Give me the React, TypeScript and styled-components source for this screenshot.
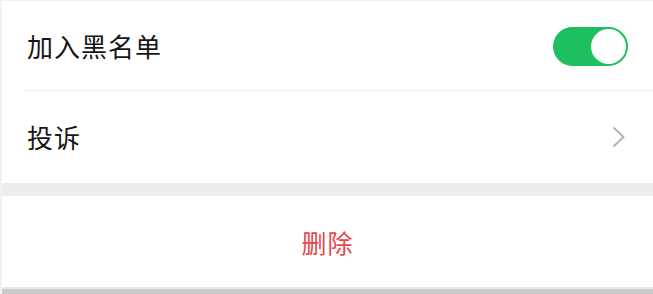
import styled, { createGlobalStyle } from "styled-components";

const GlobalStyle = createGlobalStyle`
  html, body {
    margin: 0;
    padding: 0;
    background: #ffffff;
  }
  body {
    font-family: "Noto Sans CJK SC", "Noto Sans", sans-serif;
    -webkit-font-smoothing: antialiased;
  }
`;

const Page = styled.div`
  width: 653px;
  height: 294px;
  display: flex;
  flex-direction: column;
  background: #ffffff;
  border-top: 1px solid #f0f0f0;
  border-left: 2px solid #f2f2f2;
  box-sizing: border-box;
  overflow: hidden;
`;

const Group = styled.div`
  display: flex;
  flex-direction: column;
  background: #ffffff;
`;

const Cell = styled.div<{ $divider?: boolean }>`
  position: relative;
  height: ${(p) => (p.$divider ? 90 : 92)}px;
  display: flex;
  align-items: center;
  justify-content: space-between;
  padding: 0 25px 0 25px;
  box-sizing: border-box;

  &::after {
    content: "";
    display: ${(p) => (p.$divider ? "block" : "none")};
    position: absolute;
    left: 23px;
    right: 0;
    bottom: 0;
    height: 1px;
    background: #ececec;
  }
`;

const Label = styled.span`
  font-size: 26px;
  line-height: 1;
  color: #161616;
  letter-spacing: 1px;
`;

const Switch = styled.div<{ $on: boolean }>`
  width: 75px;
  height: 39px;
  border-radius: 20px;
  background: ${(p) => (p.$on ? "#1dbf5f" : "#e5e5e5")};
  display: flex;
  align-items: center;
  justify-content: ${(p) => (p.$on ? "flex-end" : "flex-start")};
  padding: 2px;
  box-sizing: border-box;
`;

const Knob = styled.div`
  width: 35px;
  height: 35px;
  border-radius: 50%;
  background: #ffffff;
`;

const Chevron = styled.svg`
  width: 14px;
  height: 22px;
  margin-right: 2px;
`;

const Gap = styled.div`
  height: 13px;
  background: #ededed;
`;

const DangerCell = styled.button`
  height: 91px;
  border: none;
  background: #ffffff;
  display: flex;
  align-items: center;
  justify-content: center;
  font-family: inherit;
  font-size: 25px;
  color: #e5464a;
  letter-spacing: 1px;
  padding: 0;
`;

const BottomEdge = styled.div`
  flex: 1;
  border-top: 2px solid #e9e9e9;
  background: #cbcbcb;
`;

export default function App() {
  return (
    <>
      <GlobalStyle />
      <Page>
        <Group>
          <Cell $divider>
            <Label>加入黑名单</Label>
            <Switch $on>
              <Knob />
            </Switch>
          </Cell>
          <Cell>
            <Label>投诉</Label>
            <Chevron viewBox="0 0 14 22">
              <path d="M2 2L11.5 11 2 20" fill="none" stroke="#b4b4b4" strokeWidth="2" strokeLinecap="round" strokeLinejoin="round" />
            </Chevron>
          </Cell>
        </Group>
        <Gap />
        <DangerCell>删除</DangerCell>
        <BottomEdge />
      </Page>
    </>
  );
}
